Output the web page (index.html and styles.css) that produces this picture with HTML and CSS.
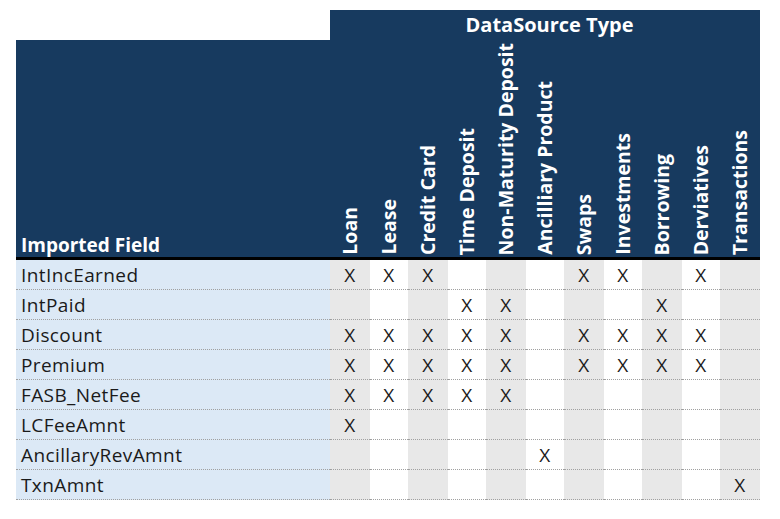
FILE: index.html
```html
<!DOCTYPE html>
<html lang="en">
<head>
<meta charset="utf-8">
<title>DataSource Type Matrix</title>
<link rel="stylesheet" href="styles.css">
</head>
<body>
<div class="page">
  <div class="matrix">
    <div class="blank"></div>
    <div class="group">DataSource Type</div>

    <div class="head field-head">Imported Field</div>
    <div class="head type"><span>Loan</span></div>
    <div class="head type"><span>Lease</span></div>
    <div class="head type"><span>Credit Card</span></div>
    <div class="head type"><span>Time Deposit</span></div>
    <div class="head type"><span>Non-Maturity Deposit</span></div>
    <div class="head type"><span>Ancilliary Product</span></div>
    <div class="head type"><span>Swaps</span></div>
    <div class="head type"><span>Investments</span></div>
    <div class="head type"><span>Borrowing</span></div>
    <div class="head type"><span>Derviatives</span></div>
    <div class="head type"><span>Transactions</span></div>

    <div class="cell field">IntIncEarned</div>
    <div class="cell g">X</div><div class="cell">X</div><div class="cell g">X</div><div class="cell"></div><div class="cell g"></div><div class="cell"></div><div class="cell g">X</div><div class="cell">X</div><div class="cell g"></div><div class="cell">X</div><div class="cell g"></div>

    <div class="cell field">IntPaid</div>
    <div class="cell g"></div><div class="cell"></div><div class="cell g"></div><div class="cell">X</div><div class="cell g">X</div><div class="cell"></div><div class="cell g"></div><div class="cell"></div><div class="cell g">X</div><div class="cell"></div><div class="cell g"></div>

    <div class="cell field">Discount</div>
    <div class="cell g">X</div><div class="cell">X</div><div class="cell g">X</div><div class="cell">X</div><div class="cell g">X</div><div class="cell"></div><div class="cell g">X</div><div class="cell">X</div><div class="cell g">X</div><div class="cell">X</div><div class="cell g"></div>

    <div class="cell field">Premium</div>
    <div class="cell g">X</div><div class="cell">X</div><div class="cell g">X</div><div class="cell">X</div><div class="cell g">X</div><div class="cell"></div><div class="cell g">X</div><div class="cell">X</div><div class="cell g">X</div><div class="cell">X</div><div class="cell g"></div>

    <div class="cell field">FASB_NetFee</div>
    <div class="cell g">X</div><div class="cell">X</div><div class="cell g">X</div><div class="cell">X</div><div class="cell g">X</div><div class="cell"></div><div class="cell g"></div><div class="cell"></div><div class="cell g"></div><div class="cell"></div><div class="cell g"></div>

    <div class="cell field">LCFeeAmnt</div>
    <div class="cell g">X</div><div class="cell"></div><div class="cell g"></div><div class="cell"></div><div class="cell g"></div><div class="cell"></div><div class="cell g"></div><div class="cell"></div><div class="cell g"></div><div class="cell"></div><div class="cell g"></div>

    <div class="cell field">AncillaryRevAmnt</div>
    <div class="cell g"></div><div class="cell"></div><div class="cell g"></div><div class="cell"></div><div class="cell g"></div><div class="cell">X</div><div class="cell g"></div><div class="cell"></div><div class="cell g"></div><div class="cell"></div><div class="cell g"></div>

    <div class="cell field">TxnAmnt</div>
    <div class="cell g"></div><div class="cell"></div><div class="cell g"></div><div class="cell"></div><div class="cell g"></div><div class="cell"></div><div class="cell g"></div><div class="cell"></div><div class="cell g"></div><div class="cell"></div><div class="cell g">X</div>
  </div>
</div>
</body>
</html>
```

FILE: styles.css
```css
html, body {
  margin: 0;
  padding: 0;
  background: #ffffff;
}

.page {
  padding: 10px 0 0 16px;
  font-family: "Open Sans", "Noto Sans", sans-serif;
  color: #1a1a1a;
}

.matrix {
  display: grid;
  grid-template-columns: 314px repeat(5, 40px 38px) 40px;
  grid-template-rows: 30px 220px repeat(8, 30px);
  width: 744px;
}

.blank {
  background: #ffffff;
}

.group {
  grid-column: 2 / span 11;
  background: #173a5f;
  color: #ffffff;
  font-weight: 700;
  font-size: 20px;
  line-height: 30px;
  text-align: center;
  padding-left: 9px;
  box-sizing: border-box;
}

.head {
  background: #173a5f;
  color: #ffffff;
  font-weight: 700;
  font-size: 19.5px;
  border-bottom: 3px solid #000000;
  box-sizing: border-box;
  display: flex;
  align-items: flex-end;
}

.field-head {
  font-size: 19px;
  padding: 0 0 0 5px;
  line-height: 24px;
}

.type {
  justify-content: center;
  padding-bottom: 2px;
}

.type span {
  writing-mode: vertical-rl;
  transform: rotate(180deg);
  line-height: 22px;
  white-space: nowrap;
}

.cell {
  font-size: 19px;
  line-height: 27px;
  padding-top: 2px;
  border-bottom: 1px dotted #a0a0a0;
  box-sizing: border-box;
  text-align: center;
  background: #ffffff;
  letter-spacing: 0.4px;
}

.cell.g {
  background: #e8e8e8;
}

.cell.field {
  background: #dce9f6;
  text-align: left;
  padding-left: 5px;
}
```
